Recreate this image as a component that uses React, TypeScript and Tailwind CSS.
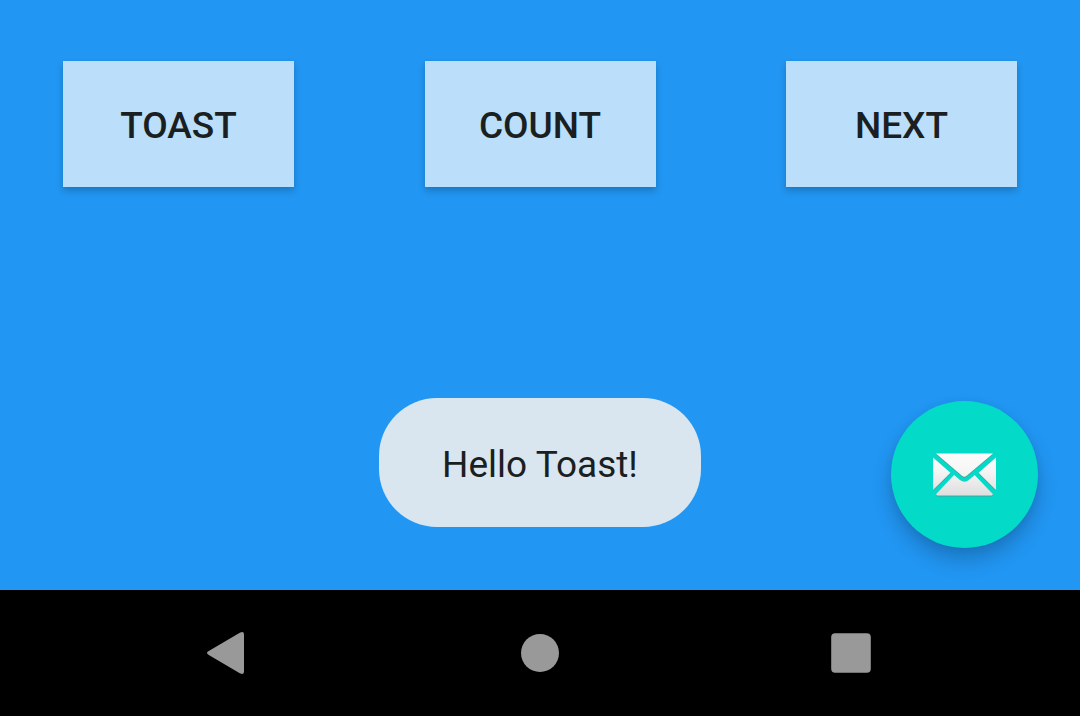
import React from "react";

const actions = ["Toast", "Count", "Next"];

function EnvelopeIcon() {
  return (
    <svg width="65" height="45" viewBox="0 0 65 45" aria-hidden="true">
      <defs>
        <linearGradient id="paper" x1="0" y1="1" x2="0" y2="44" gradientUnits="userSpaceOnUse">
          <stop offset="0" stopColor="#fcfcfc" />
          <stop offset="0.4" stopColor="#f6f6f6" />
          <stop offset="1" stopColor="#dedede" />
        </linearGradient>
        <filter id="edge" x="-5%" y="-5%" width="110%" height="115%">
          <feDropShadow dx="0" dy="0.7" stdDeviation="0.6" floodColor="#6f6f6f" floodOpacity="0.8" />
        </filter>
      </defs>
      <g fill="url(#paper)" filter="url(#edge)">
        <path d="M4 1.4H61L34.6 23.8Q32.3 25.6 30 23.8Z" />
        <path d="M1 5.4L18.4 20.8L1 38Z" />
        <path d="M64 5.4L46.6 20.8L64 38Z" />
        <path d="M22 23L28 28Q32.4 31.4 36.8 28L42.6 23L61 42.2L59.8 43.4H5.2L4 42.2Z" />
      </g>
    </svg>
  );
}

function NavigationBar() {
  return (
    <nav
      aria-label="System navigation"
      className="flex h-[126px] items-center justify-between bg-black px-[166px] text-[#999999]"
    >
      <button type="button" aria-label="Back" className="flex size-[126px] items-center justify-center">
        <svg width="48" height="48" viewBox="0 0 48 48" aria-hidden="true">
          <path
            d="M4.2 21.8L34.8 3.7Q39 1.6 39 5.4V42.6Q39 46.4 34.8 44.3L4.2 26.2Q-0.2 24 4.2 21.8Z"
            fill="currentColor"
          />
        </svg>
      </button>
      <button type="button" aria-label="Home" className="flex size-[126px] items-center justify-center">
        <svg width="48" height="48" viewBox="0 0 48 48" aria-hidden="true">
          <circle cx="24" cy="24" r="19" fill="currentColor" />
        </svg>
      </button>
      <button type="button" aria-label="Overview" className="flex size-[126px] items-center justify-center">
        <svg width="48" height="48" viewBox="0 0 48 48" aria-hidden="true">
          <rect x="4.2" y="4.2" width="39.6" height="39.6" rx="4" fill="currentColor" />
        </svg>
      </button>
    </nav>
  );
}

export default function App() {
  return (
    <div className="flex min-h-screen flex-col bg-[#2196f3] font-[Roboto,sans-serif] text-[37px] text-[#1a1f21]">
      <main className="relative flex-1 px-[63px] pt-[61px]">
        <div className="flex justify-between">
          {actions.map((label) => (
            <button
              key={label}
              type="button"
              className="h-[126px] w-[231px] bg-[#bbdefb] pt-1 font-medium uppercase shadow-[0_4px_7px_rgba(0,0,0,0.2),0_0_3px_rgba(0,0,0,0.04)]"
            >
              {label}
            </button>
          ))}
        </div>

        <div className="absolute inset-x-0 bottom-[63px] flex justify-center">
          <div role="status" className="rounded-[58px] bg-[#d9e6ef] px-[63px] pt-11 pb-10 leading-[45px]">
            Hello Toast!
          </div>
        </div>

        <button
          type="button"
          aria-label="Send message"
          className="absolute right-[42px] bottom-[42px] flex size-[147px] items-center justify-center rounded-full bg-[#03dac8] shadow-[0_12px_20px_rgba(0,0,0,0.2),0_2px_8px_rgba(0,0,0,0.06)]"
        >
          <EnvelopeIcon />
        </button>
      </main>
      <NavigationBar />
    </div>
  );
}
